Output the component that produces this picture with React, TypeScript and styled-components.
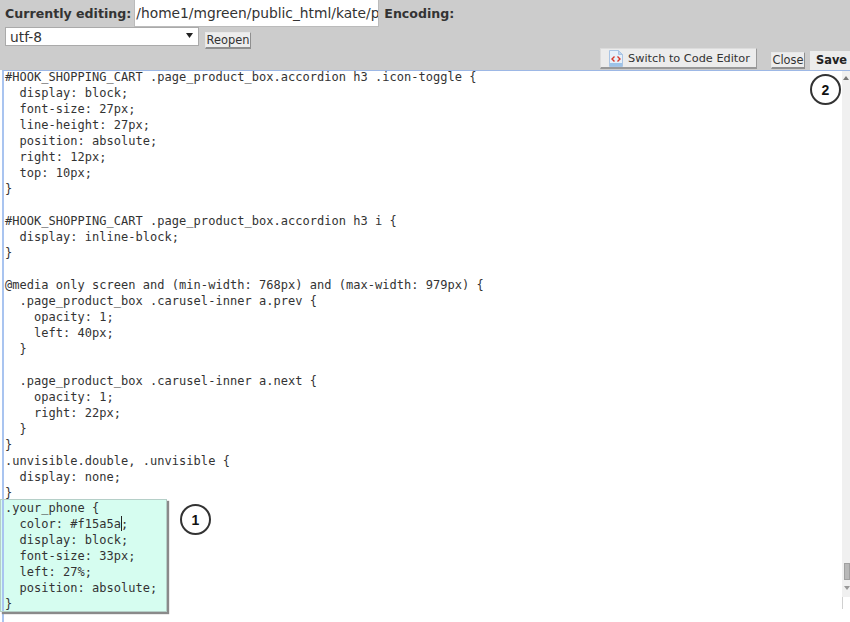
import React from "react";
import styled, { createGlobalStyle } from "styled-components";

const Global = createGlobalStyle`
  html, body { margin: 0; padding: 0; background: #fff; }
  body { width: 850px; height: 622px; overflow: hidden; font-family: "DejaVu Sans", sans-serif; }
`;

const Page = styled.div`
  width: 850px;
  height: 622px;
  position: relative;
  overflow: hidden;
`;

const Header = styled.div`
  height: 70px;
  background: #cccccc;
  box-sizing: border-box;
  padding-left: 5px;
`;

const FileRow = styled.div`
  display: flex;
  align-items: center;
  height: 27px;
`;

const Label = styled.b`
  font-family: "DejaVu Sans", sans-serif;
  font-size: 12.6px;
  color: #333;
  white-space: nowrap;
`;

const PathBox = styled.div`
  flex: none;
  width: 245px;
  height: 27px;
  margin: 0 5px 0 3px;
  box-sizing: border-box;
  background: #fff;
  border: 1px solid #bbb;
  border-top: 0;
  padding: 5px 0 0 1px;
  font-size: 13.8px;
  color: #333;
  overflow: hidden;
  white-space: nowrap;
`;

const EncodingRow = styled.div`
  display: flex;
  align-items: flex-start;
  height: 21px;
`;

const SelectBox = styled.div`
  width: 194px;
  height: 19px;
  box-sizing: border-box;
  background: #fff;
  border: 1px solid #aaa;
  font-size: 13.8px;
  line-height: 18px;
  color: #333;
  padding-left: 4px;
  display: flex;
  justify-content: space-between;
`;

const Arrow = styled.svg`
  width: 7px;
  height: 5px;
  margin: 5px 5px 0 0;
`;

const SmallButton = styled.div`
  box-sizing: border-box;
  background: #ededed;
  border: 1px solid #e8e8e8;
  border-right-color: #8f8f8f;
  border-bottom: 2px solid #8f8f8f;
  font-size: 11.4px;
  color: #333;
  height: 17px;
  line-height: 14px;
  text-align: center;
`;

const ReopenButton = styled(SmallButton)`
  width: 46px;
  margin: 5px 0 0 6px;
`;

const ActionRow = styled.div`
  display: flex;
  justify-content: flex-end;
  align-items: flex-start;
  height: 22px;
  margin-left: -5px;
`;

const SwitchButton = styled.div`
  width: 157px;
  height: 21px;
  box-sizing: border-box;
  background: #ececec;
  border: 1px solid #dcdcdc;
  border-right-color: #999;
  border-bottom: 2px solid #999;
  display: flex;
  align-items: center;
  gap: 5px;
  padding-left: 8px;
  font-size: 11.3px;
  color: #333;
  margin-right: 14px;
`;

const CodeIcon = styled.svg`
  flex: none;
  margin-top: 1px;
`;

const CloseButton = styled(SmallButton)`
  width: 34px;
  height: 17px;
  margin: 4px 5px 0 0;
`;

const SaveButton = styled.div`
  width: 40px;
  height: 19px;
  box-sizing: border-box;
  background: #ececec;
  margin-top: 3px;
  font-size: 11.4px;
  font-weight: bold;
  color: #222;
  line-height: 18px;
  padding-left: 6px;
  white-space: nowrap;
`;

const Editor = styled.div`
  height: 552px;
  margin-left: 2px;
  box-sizing: border-box;
  border-top: 1px solid #9db8e6;
  border-left: 2px solid #a9c4f0;
  position: relative;
  background: #fff;
`;

const Code = styled.pre`
  margin: -2px 0 0;
  padding: 0 0 0 1px;
  font-family: "DejaVu Sans Mono", monospace;
  font-size: 12px;
  line-height: 16px;
  letter-spacing: 0.03px;
  color: #333;
`;

const Scrollbar = styled.div`
  position: absolute;
  right: 0;
  top: 0;
  bottom: 25px;
  width: 8px;
  background: #f0f0f0;
`;

const ScrollUp = styled.div`
  position: absolute;
  top: 5px;
  left: 1px;
  width: 0;
  height: 0;
  border-left: 3px solid transparent;
  border-right: 3px solid transparent;
  border-bottom: 4px solid #777;
`;

const ScrollThumb = styled.div`
  position: absolute;
  top: 492px;
  left: 2px;
  width: 6px;
  height: 17px;
  background: #b8b8b8;
  border: 1px solid #a0a0a0;
  box-sizing: border-box;
`;

const ScrollDown = styled.div`
  position: absolute;
  top: 515px;
  left: 2px;
  width: 0;
  height: 0;
  border-left: 3px solid transparent;
  border-right: 3px solid transparent;
  border-top: 4px solid #999;
`;

const ScrollCorner = styled.div`
  position: absolute;
  right: 7px;
  bottom: 13px;
  width: 1px;
  height: 12px;
  background: #d0d0d0;
`;

const Highlight = styled.pre`
  position: absolute;
  left: 0;
  top: 499px;
  width: 167px;
  height: 113px;
  margin: 0;
  box-sizing: border-box;
  background: #d6fdf0;
  border: 1px solid #b5cfc8;
  box-shadow: 2px 2px 1px #8a8a8a;
  padding: 0 0 0 4px;
  font-family: "DejaVu Sans Mono", monospace;
  font-size: 12px;
  line-height: 16px;
  letter-spacing: 0.03px;
  color: #333;

  &::before {
    content: "";
    position: absolute;
    left: 1px;
    top: 0;
    bottom: 0;
    width: 2px;
    background: #a9c4f0;
  }
`;

const Caret = styled.span`
  display: inline-block;
  width: 0;
  height: 15px;
  margin-right: -1px;
  vertical-align: -3px;
  border-left: 1px solid #222;
`;

const Marker = styled.div<{ $left: number; $top: number }>`
  position: absolute;
  left: ${(p) => p.$left}px;
  top: ${(p) => p.$top}px;
  width: 31px;
  height: 31px;
  box-sizing: border-box;
  border: 2px solid #333;
  border-radius: 50%;
  background: #fff;
  display: flex;
  align-items: center;
  justify-content: center;
  font-family: "Liberation Sans", Arial, sans-serif;
  font-weight: bold;
  font-size: 14px;
  color: #111;
`;

const codeText = `#HOOK_SHOPPING_CART .page_product_box.accordion h3 .icon-toggle {
  display: block;
  font-size: 27px;
  line-height: 27px;
  position: absolute;
  right: 12px;
  top: 10px;
}

#HOOK_SHOPPING_CART .page_product_box.accordion h3 i {
  display: inline-block;
}

@media only screen and (min-width: 768px) and (max-width: 979px) {
  .page_product_box .carusel-inner a.prev {
    opacity: 1;
    left: 40px;
  }

  .page_product_box .carusel-inner a.next {
    opacity: 1;
    right: 22px;
  }
}
.unvisible.double, .unvisible {
  display: none;
}`;

export default function App() {
  return (
    <Page>
      <Global />
      <Header>
        <FileRow>
          <Label>Currently editing:</Label>
          <PathBox>/home1/mgreen/public_html/kate/pr</PathBox>
          <Label>Encoding:</Label>
        </FileRow>
        <EncodingRow>
          <SelectBox>
            utf-8
            <Arrow viewBox="0 0 7 5">
              <path d="M0 0h7L3.5 5z" fill="#222" />
            </Arrow>
          </SelectBox>
          <ReopenButton>Reopen</ReopenButton>
        </EncodingRow>
        <ActionRow>
          <SwitchButton>
            <CodeIcon width="14" height="17" viewBox="0 0 14 17">
              <path d="M.5.5h9l4 4v12H.5z" fill="#e6f0fa" stroke="#a9c4e4" />
              <path d="M9.5.5v4h4z" fill="#bcd4ee" stroke="#a9c4e4" />
              <path d="M1 13h12v3H1z" fill="#9cc3e8" />
              <path d="M5.5 6.5 3 9l2.5 2.5M8.5 6.5 11 9l-2.5 2.5" fill="none" stroke="#d8392b" strokeWidth="1.4" />
            </CodeIcon>
            Switch to Code Editor
          </SwitchButton>
          <CloseButton>Close</CloseButton>
          <SaveButton>Save</SaveButton>
        </ActionRow>
      </Header>
      <Editor>
        <Code>{codeText}</Code>
        <Scrollbar>
          <ScrollUp />
          <ScrollThumb />
          <ScrollDown />
        </Scrollbar>
        <ScrollCorner />
      </Editor>
      <Highlight>
        {".your_phone {\n  color: #f15a5a"}
        <Caret />
        {";\n  display: block;\n  font-size: 33px;\n  left: 27%;\n  position: absolute;\n}"}
      </Highlight>
      <Marker $left={180} $top={504}>1</Marker>
      <Marker $left={810} $top={74}>2</Marker>
    </Page>
  );
}
